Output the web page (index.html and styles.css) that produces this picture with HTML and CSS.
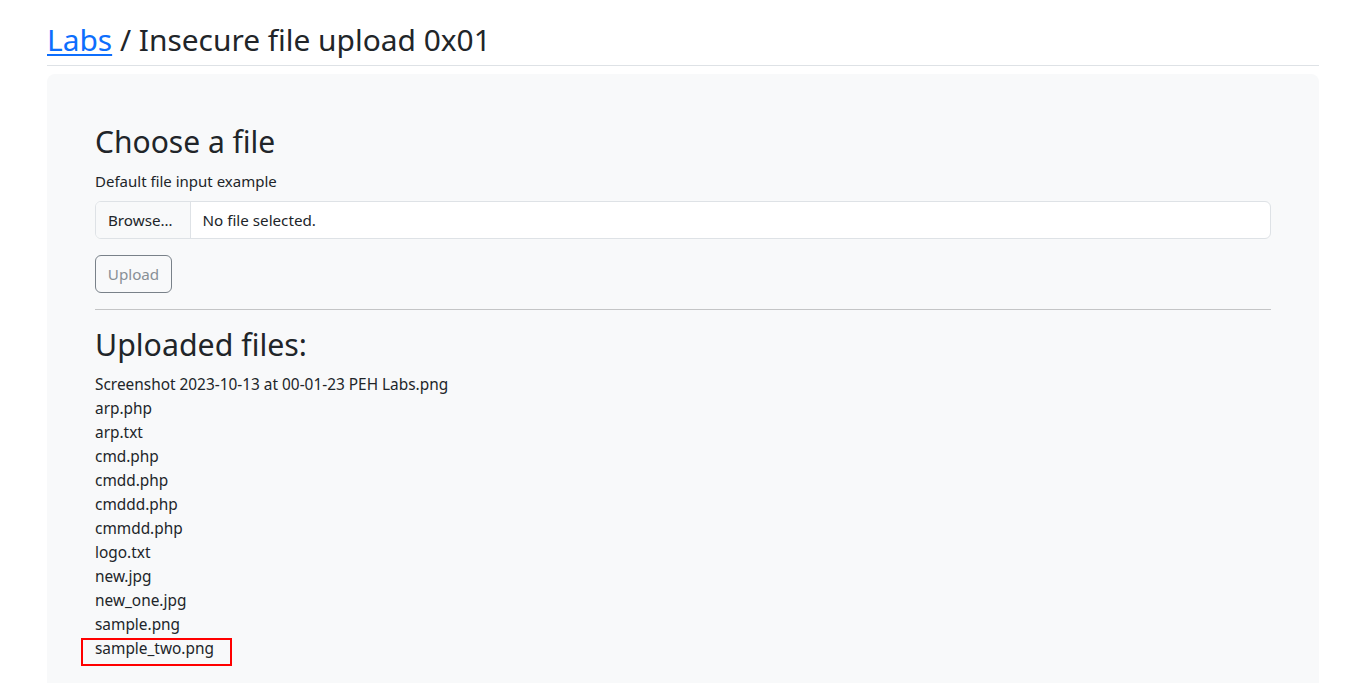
FILE: index.html
```html
<!DOCTYPE html>
<html lang="en">
<head>
<meta charset="utf-8">
<title>Insecure file upload 0x01</title>
<link rel="stylesheet" href="styles.css">
</head>
<body>
<div class="page">
  <h3 class="title"><a href="#" class="crumb">Labs</a> / Insecure file upload 0x01</h3>
  <hr class="title-rule">
  <div class="panel">
    <h3 class="section-title">Choose a file</h3>
    <label class="form-label">Default file input example</label>
    <div class="file-input">
      <span class="file-btn">Browse…</span>
      <span class="file-name">No file selected.</span>
    </div>
    <button class="btn-upload" disabled>Upload</button>
    <hr class="divider">
    <h2 class="files-title">Uploaded files:</h2>
    <ul class="file-list">
      <li>Screenshot 2023-10-13 at 00-01-23 PEH Labs.png</li>
      <li>arp.php</li>
      <li>arp.txt</li>
      <li>cmd.php</li>
      <li>cmdd.php</li>
      <li>cmddd.php</li>
      <li>cmmdd.php</li>
      <li>logo.txt</li>
      <li>new.jpg</li>
      <li>new_one.jpg</li>
      <li>sample.png</li>
      <li><span class="highlight">sample_two.png</span></li>
    </ul>
  </div>
</div>
</body>
</html>
```

FILE: styles.css
```css
html, body {
  margin: 0;
  padding: 0;
  background: #fff;
  overflow: hidden;
}
body {
  font-family: "Noto Sans", "DejaVu Sans", sans-serif;
  font-size: 16px;
  line-height: 1.5;
  color: #212529;
}
.page {
  width: 1272px;
  margin-left: 47px;
  padding-top: 22px;
}
.title {
  margin: 0;
  font-size: 29.9px;
  font-weight: 400;
  line-height: 36px;
}
.crumb {
  color: #0d6efd;
  text-decoration: underline;
  text-underline-offset: 3px;
}
.title-rule {
  margin: 7px 0 8px;
  border: 0;
  border-top: 1px solid #dee2e6;
}
.panel {
  background: #f8f9fa;
  border-radius: 8px;
  padding: 50px 48px 48px;
  min-height: 700px;
}
.section-title {
  margin: 0 0 9px;
  font-size: 30px;
  font-weight: 400;
  line-height: 36px;
}
.form-label {
  display: block;
  margin-bottom: 8px;
  font-size: 15px;
  line-height: 24px;
}
.file-input {
  display: flex;
  align-items: center;
  height: 38px;
  box-sizing: border-box;
  border: 1px solid #dee2e6;
  border-radius: 6px;
  background: #fff;
  overflow: hidden;
  font-size: 15.2px;
}
.file-btn {
  display: flex;
  align-items: center;
  height: 100%;
  padding: 0 17px 0 12px;
  background: #f8f9fa;
  border-right: 1px solid #dee2e6;
  color: #212529;
}
.file-name {
  padding-left: 12px;
}
.btn-upload {
  display: block;
  margin-top: 16px;
  height: 38px;
  width: 77px;
  padding: 0;
  font-family: inherit;
  font-size: 15.2px;
  color: #7c858c;
  background: transparent;
  border: 1px solid #6c757d;
  border-radius: 6px;
  opacity: 0.9;
}
.divider {
  margin: 16px 0;
  border: 0;
  border-top: 1px solid #c4c5c6;
}
.files-title {
  margin: 0 0 10px;
  font-size: 30.3px;
  font-weight: 400;
  line-height: 37px;
}
.file-list {
  list-style: none;
  margin: 0;
  padding: 0;
  font-size: 15.4px;
  line-height: 24px;
}
.highlight {
  position: relative;
  display: inline-block;
}
.highlight::after {
  content: "";
  position: absolute;
  left: -14px;
  top: 1px;
  width: 151px;
  height: 28px;
  box-sizing: border-box;
  border: 2px solid #f00;
}
```
